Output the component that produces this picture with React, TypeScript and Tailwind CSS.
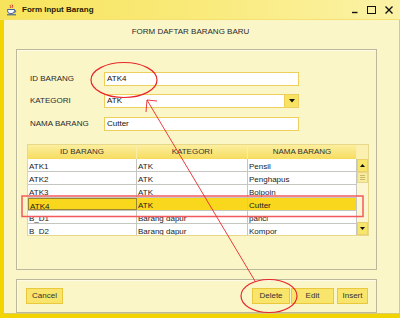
import React from 'react';

type Row = { id: string; kategori: string; nama: string };

const rows: Row[] = [
    { id: 'ATK1', kategori: 'ATK', nama: 'Pensil' },
    { id: 'ATK2', kategori: 'ATK', nama: 'Penghapus' },
    { id: 'ATK3', kategori: 'ATK', nama: 'Bolpoin' },
    { id: 'ATK4', kategori: 'ATK', nama: 'Cutter' },
    { id: 'B_D1', kategori: 'Barang dapur', nama: 'panci' },
    { id: 'B_D2', kategori: 'Barang dapur', nama: 'Kompor' },
];

const JavaIcon = () => (
    <svg width="11" height="12" viewBox="0 0 11 12">
        <path d="M4 1 q1.5 1.5 0 3 M6 0.5 q1.5 1.5 0 3.5" stroke="#d03030" strokeWidth="0.9" fill="none" />
        <path d="M1.5 5.5 h7 v1.2 q0 3 -3.5 3 q-3.5 0 -3.5 -3 z" fill="#fff" stroke="#3050a0" strokeWidth="0.9" />
        <path d="M8.5 6.3 q1.8 0 1.2 1.5 q-0.5 0.8 -1.6 0.7" stroke="#3050a0" strokeWidth="0.8" fill="none" />
        <path d="M1 10.8 h9" stroke="#3050a0" strokeWidth="1" />
    </svg>
);

const Field = ({ label, value, combo }: { label: string; value: string; combo?: boolean }) => (
    <div className="flex items-center h-[14px]">
        <span className="w-[74px] text-[#2a2a2a]">{label}</span>
        <div className="flex w-[195px] h-[14px] border border-[#eecf5c] bg-white">
            <span className="flex-1 pl-[2px] leading-[12px] text-[#111]">{value}</span>
            {combo && (
                <div className="w-[14px] h-full bg-[#f8e262] border-l border-[#eed057] flex items-center justify-center">
                    <svg width="6" height="4" viewBox="0 0 6 4">
                        <path d="M0 0 h6 l-3 3.5 z" fill="#111" />
                    </svg>
                </div>
            )}
        </div>
    </div>
);

const Btn = ({ label, w }: { label: string; w: string }) => (
    <button className={`${w} h-[16px] bg-[#f9e46c] border border-[#e9c83e] text-[#333] text-[8px] leading-none flex items-center justify-center`}>
        {label}
    </button>
);

export default function App() {
    return (
        <div className="relative w-[400px] h-[318px] overflow-hidden flex flex-col bg-[#f2d500] font-['Liberation_Sans',Arial,sans-serif] text-[8px]">
            {/* Title bar */}
            <div className="h-[20px] flex items-center bg-gradient-to-r from-[#f7e45c] via-[#f9ea7a] to-[#fbf2a6] border-b border-[#f5e070]">
                <div className="ml-[5px] w-[12px] flex items-center justify-center">
                    <JavaIcon />
                </div>
                <span className="ml-[5px] font-bold text-[#2a1a00]">Form Input Barang</span>
                <div className="ml-auto mr-[7px] flex items-center gap-[9px]">
                    <svg width="6" height="8" viewBox="0 0 6 8"><path d="M0 6.5 h5.5" stroke="#111" strokeWidth="1.4" /></svg>
                    <svg width="9" height="8" viewBox="0 0 9 8"><rect x="0.5" y="0.5" width="8" height="7" fill="none" stroke="#111" strokeWidth="1" /></svg>
                    <svg width="8" height="8" viewBox="0 0 8 8"><path d="M0.5 0.5 L7.5 7.5 M7.5 0.5 L0.5 7.5" stroke="#111" strokeWidth="1.4" /></svg>
                </div>
            </div>

            {/* Body */}
            <div className="flex-1 ml-[4px] mb-[4px] bg-[#fbf6c8] flex flex-col px-[12px] border-b border-r border-[#d9cc70]">
                <div className="h-[24px] flex items-center justify-center text-[#2a2a2a] pr-[22px]">FORM DAFTAR BARANG BARU</div>

                {/* Main panel */}
                <div className="mt-[5px] w-[361px] h-[221px] border border-[#bcb89c] shadow-[inset_1px_1px_0_#fffbe8] flex flex-col pl-[13px]">
                    <div className="mt-[22px] flex flex-col">
                        <Field label="ID BARANG" value="ATK4" />
                        <div className="mt-[8px]"><Field label="KATEGORI" value="ATK" combo /></div>
                        <div className="mt-[9px]"><Field label="NAMA BARANG" value="Cutter" /></div>
                    </div>

                    {/* Table */}
                    <div className="mt-[13px] -ml-[3px] w-[342px] h-[92px] border border-[#e8d88c] flex flex-col overflow-hidden bg-[#fdf8d8]">
                        <div className="flex h-[14px] shrink-0 bg-gradient-to-b from-[#fcef9e] to-[#f6dc5c] text-[#333]">
                            <div className="w-[109px] border-r border-[#fbeea8] flex items-center justify-center">ID BARANG</div>
                            <div className="w-[111px] border-r border-[#fbeea8] flex items-center justify-center">KATEGORI</div>
                            <div className="w-[109px] border-r border-[#fbeea8] flex items-center justify-center">NAMA BARANG</div>
                            <div className="w-[11px] bg-[#fbf0b0]" />
                        </div>
                        <div className="flex flex-1 overflow-hidden">
                            <div className="w-[329px] flex flex-col">
                                {rows.map((r, i) => {
                                    const sel = i === 3;
                                    return (
                                        <div key={r.id} className={`flex shrink-0 h-[13px] overflow-hidden border-b border-[#c6c6c0] ${sel ? 'bg-[#f9d71c]' : 'bg-white'} text-[#1a1a1a]`}>
                                            <div className={`w-[109px] border-r pt-[2px] leading-[11px] pl-[1px] ${sel ? 'border border-[#9a8530] pt-[1px]' : 'border-[#c6c6c0]'}`}>{r.id}</div>
                                            <div className="w-[111px] border-r border-[#c6c6c0] pt-[2px] leading-[11px] pl-[1px]">{r.kategori}</div>
                                            <div className="w-[109px] border-r border-[#c6c6c0] pt-[2px] leading-[11px] pl-[1px]">{r.nama}</div>
                                        </div>
                                    );
                                })}
                            </div>
                            {/* Scrollbar */}
                            <div className="w-[11px] flex flex-col bg-[#fdf6d2]">
                                <div className="h-[13px] bg-[#f8e56c] border border-[#ead16a] flex items-center justify-center">
                                    <svg width="5" height="3" viewBox="0 0 5 3"><path d="M0 3 L2.5 0 L5 3 z" fill="#111" /></svg>
                                </div>
                                <div className="h-[11px] bg-[#f7ec9e] border border-[#ead58a] flex flex-col items-center justify-center gap-[1px]">
                                    <div className="w-[5px] h-px bg-[#c9b86a]" />
                                    <div className="w-[5px] h-px bg-[#c9b86a]" />
                                    <div className="w-[5px] h-px bg-[#c9b86a]" />
                                </div>
                                <div className="flex-1" />
                                <div className="h-[13px] bg-[#f8e56c] border border-[#ead16a] flex items-center justify-center">
                                    <svg width="5" height="3" viewBox="0 0 5 3"><path d="M0 0 L2.5 3 L5 0 z" fill="#111" /></svg>
                                </div>
                            </div>
                        </div>
                    </div>
                </div>

                {/* Button panel */}
                <div className="mt-[9px] w-[361px] h-[34px] border border-[#bcb89c] shadow-[inset_1px_1px_0_#fffbe8] flex items-center pl-[9px] pr-[8px]">
                    <Btn label="Cancel" w="w-[37px]" />
                    <div className="ml-auto flex items-center">
                        <Btn label="Delete" w="w-[38px]" />
                        <div className="ml-[1px]"><Btn label="Edit" w="w-[43px]" /></div>
                        <div className="ml-[3px]"><Btn label="Insert" w="w-[31px]" /></div>
                    </div>
                </div>
            </div>

            {/* Red annotations */}
            <svg className="absolute inset-0 pointer-events-none" width="400" height="318" viewBox="0 0 400 318">
                <g stroke="#e8262a" fill="none" strokeWidth="1.2">
                    <ellipse cx="124" cy="80" rx="33" ry="17.5" />
                    <rect x="22" y="196" width="341" height="20.5" stroke="#f25a5e" strokeWidth="1.5" />
                    <path d="M255 281 L147 100" strokeWidth="0.9" />
                    <path d="M146 112 L147 100 L157 101" strokeWidth="0.9" />
                    <ellipse cx="269" cy="296" rx="28" ry="16.5" />
                </g>
            </svg>
        </div>
    );
}
